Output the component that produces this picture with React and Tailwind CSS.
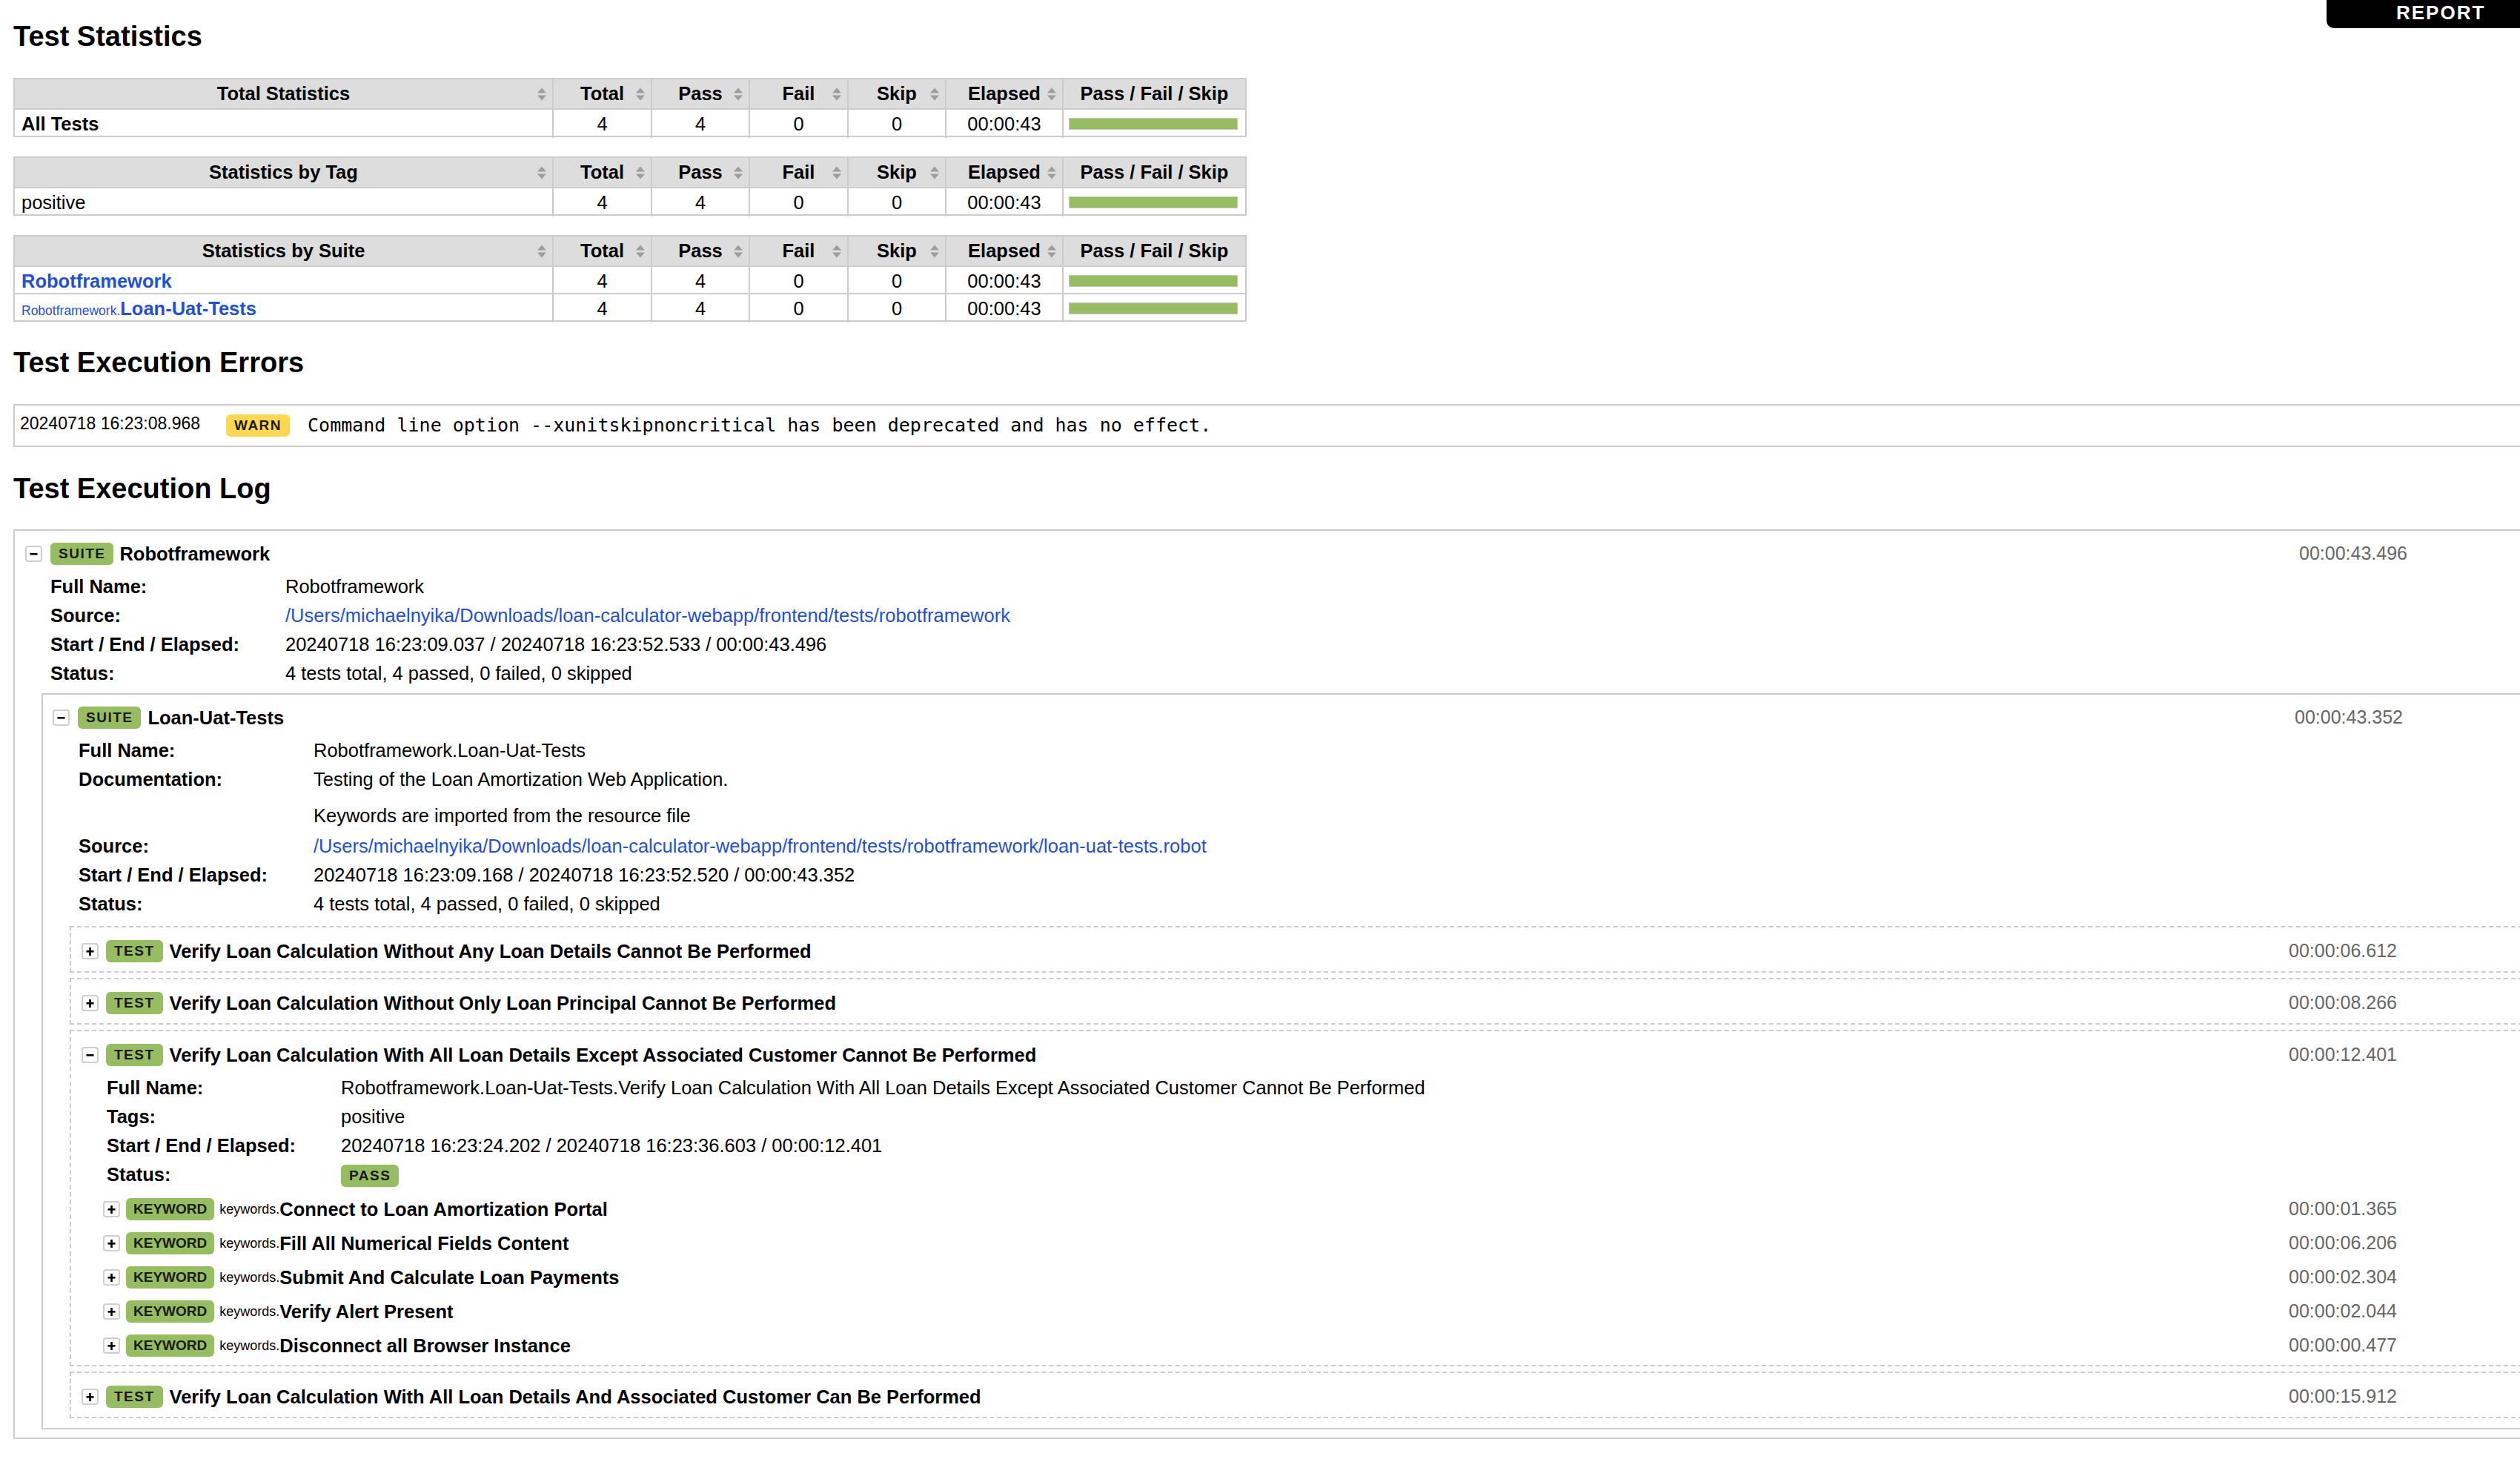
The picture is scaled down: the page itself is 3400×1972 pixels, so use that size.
const cols = 'grid grid-cols-[725px_133px_132px_133px_132px_158px_247px]'

function SortIcon() {
  return (
    <svg className="absolute right-[7px] top-1/2 -translate-y-1/2" width="14" height="19" viewBox="0 0 14 19">
      <path d="M7 1L13 8H1Z M1 11H13L7 18Z" fill="#9d9d9d" />
    </svg>
  )
}

function Toggle({ open }) {
  return (
    <span className="flex h-[22px] w-[23px] shrink-0 items-center justify-center rounded-[4px] border-2 border-[#cfcfcf] bg-white">
      <svg width="11" height="11" viewBox="0 0 11 11">
        <rect x="0.5" y="4" width="10" height="2.6" fill="#000" />
        {!open && <rect x="4.2" y="0" width="2.6" height="11" fill="#000" />}
      </svg>
    </span>
  )
}

function Label({ children, className = '', track = 'tracking-[1.5px] px-[11px]' }) {
  return (
    <span className={`flex h-[30px] shrink-0 items-center rounded-[6px] bg-[#97bd61] text-[19px] font-bold text-[#1a1a1a] ${track} ${className}`}>
      {children}
    </span>
  )
}

function Elapsed({ children }) {
  return <span className="ml-auto text-[25px] text-[#666]">{children}</span>
}

function Meta({ label, children, w = 'grid-cols-[317px_1fr]' }) {
  return (
    <div className={`grid ${w} leading-[39px]`}>
      <span className="font-bold">{label}</span>
      <div>{children}</div>
    </div>
  )
}

function StatTable({ title, rows }) {
  const heads = ['Total', 'Pass', 'Fail', 'Skip', 'Elapsed']
  return (
    <div className="w-[1664px] border-2 border-[#ccc]">
      <div className={`${cols} h-[39px] bg-[#ddd] font-bold`}>
        <div className="relative flex items-center justify-center">
          {title}
          <SortIcon />
        </div>
        {heads.map((h) => (
          <div key={h} className="relative flex items-center justify-center border-l-2 border-[#ccc]">
            {h}
            <SortIcon />
          </div>
        ))}
        <div className="flex items-center justify-center border-l-2 border-[#ccc]">Pass / Fail / Skip</div>
      </div>
      {rows.map((r, i) => (
        <div key={i} className={`${cols} h-[37px] border-t-2 border-[#ccc]`}>
          <div className="flex items-center pl-[9px]">{r.name}</div>
          <div className="flex items-center justify-center border-l-2 border-[#ccc]">4</div>
          <div className="flex items-center justify-center border-l-2 border-[#ccc]">4</div>
          <div className="flex items-center justify-center border-l-2 border-[#ccc]">0</div>
          <div className="flex items-center justify-center border-l-2 border-[#ccc]">0</div>
          <div className="flex items-center justify-center border-l-2 border-[#ccc]">00:00:43</div>
          <div className="flex items-center border-l-2 border-[#ccc] pl-[7px] pr-[10px]">
            <div className="h-[16px] flex-1 border border-[#c4c4c4] bg-[#97bd61]" />
          </div>
        </div>
      ))}
    </div>
  )
}

function TestBox({ name, elapsed, children, open }) {
  return (
    <div className="mr-[6px] border-2 border-dashed border-[#ccc]">
      <div className={`flex h-[30px] items-center pl-[14px] pr-[188px] ${open ? 'mt-[17px] mb-[10px]' : 'mt-[17px] mb-[12px]'}`}>
        <Toggle open={open} />
        <Label className="ml-[10px]">TEST</Label>
        <span className="ml-[9px] font-bold">{name}</span>
        <Elapsed>{elapsed}</Elapsed>
      </div>
      {children}
    </div>
  )
}

function Keyword({ name, elapsed }) {
  return (
    <div className="flex h-[46px] items-center pl-[43px] pr-[188px]">
      <Toggle />
      <Label className="ml-[8px]" track="tracking-[0px] px-[10px]">KEYWORD</Label>
      <span className="ml-[7px] text-[18px]">keywords.</span>
      <span className="font-bold">{name}</span>
      <Elapsed>{elapsed}</Elapsed>
    </div>
  )
}

const link = 'text-[#1f50d6]'

export default function App() {
  return (
    <div className="relative min-h-[1972px] w-[3400px] overflow-hidden bg-white font-['Liberation_Sans',Arial,sans-serif] text-[25.5px] text-black">
      {/* report tab */}
      <a className="absolute right-0 top-0 h-[38px] w-[261px] rounded-bl-[10px] bg-black pl-[94px] pt-[4px] text-[26px] font-bold leading-[26px] tracking-[2px] text-white">
        REPORT
      </a>

      <div className="w-[3440px] pl-[18px] pt-[27px]">
        <h2 className="text-[38px] font-bold leading-[44px]">Test Statistics</h2>

        <div className="mt-[34px] flex flex-col gap-[26px]">
          <StatTable title="Total Statistics" rows={[{ name: <span className="font-bold">All Tests</span> }]} />
          <StatTable title="Statistics by Tag" rows={[{ name: 'positive' }]} />
          <StatTable
            title="Statistics by Suite"
            rows={[
              { name: <span className={`font-bold ${link}`}>Robotframework</span> },
              {
                name: (
                  <span className={link}>
                    <span className="text-[17.5px]">Robotframework.</span>
                    <span className="font-bold">Loan-Uat-Tests</span>
                  </span>
                ),
              },
            ]}
          />
        </div>

        <h2 className="mt-[33px] text-[38px] font-bold leading-[44px]">Test Execution Errors</h2>
        <div className="mt-[34px] flex h-[58px] w-[3422px] items-center border-2 border-[#ccc]">
          <span className="mb-[6px] w-[285px] shrink-0 pl-[7px] text-[23px]">20240718 16:23:08.968</span>
          <span className="flex h-[30px] items-center rounded-[6px] bg-[#fed84f] px-[11px] text-[19px] font-bold tracking-[1.5px] text-[#1a1a1a]">
            WARN
          </span>
          <span className="ml-[24px] font-['DejaVu_Sans_Mono',monospace] text-[25px]">
            Command line option --xunitskipnoncritical has been deprecated and has no effect.
          </span>
        </div>

        <h2 className="mt-[34px] text-[38px] font-bold leading-[44px]">Test Execution Log</h2>

        {/* top suite */}
        <div className="mt-[33px] w-[3422px] border-2 border-[#ccc] pb-[11px]">
          <div className="mb-[10px] mt-[16px] flex h-[30px] items-center pl-[14px] pr-[190px]">
            <Toggle open />
            <Label className="ml-[11px]">SUITE</Label>
            <span className="ml-[8px] font-bold">Robotframework</span>
            <Elapsed>00:00:43.496</Elapsed>
          </div>
          <div className="pl-[48px]">
            <Meta label="Full Name:">Robotframework</Meta>
            <Meta label="Source:">
              <span className={link}>/Users/michaelnyika/Downloads/loan-calculator-webapp/frontend/tests/robotframework</span>
            </Meta>
            <Meta label="Start / End / Elapsed:">20240718 16:23:09.037 / 20240718 16:23:52.533 / 00:00:43.496</Meta>
            <Meta label="Status:">4 tests total, 4 passed, 0 failed, 0 skipped</Meta>
          </div>

          {/* child suite */}
          <div className="ml-[36px] mr-[6px] mt-[7px] border-2 border-[#ccc] pb-[13px]">
            <div className="mb-[10px] mt-[16px] flex h-[30px] items-center pl-[13px] pr-[188px]">
              <Toggle open />
              <Label className="ml-[11px]">SUITE</Label>
              <span className="ml-[9px] font-bold">Loan-Uat-Tests</span>
              <Elapsed>00:00:43.352</Elapsed>
            </div>
            <div className="pl-[48px]">
              <Meta label="Full Name:">Robotframework.Loan-Uat-Tests</Meta>
              <Meta label="Documentation:">
                <p>Testing of the Loan Amortization Web Application.</p>
                <p className="mb-[2px] mt-[10px]">Keywords are imported from the resource file</p>
              </Meta>
              <Meta label="Source:">
                <span className={link}>
                  /Users/michaelnyika/Downloads/loan-calculator-webapp/frontend/tests/robotframework/loan-uat-tests.robot
                </span>
              </Meta>
              <Meta label="Start / End / Elapsed:">20240718 16:23:09.168 / 20240718 16:23:52.520 / 00:00:43.352</Meta>
              <Meta label="Status:">4 tests total, 4 passed, 0 failed, 0 skipped</Meta>
            </div>

            <div className="ml-[36px] mt-[10px] flex flex-col gap-[7px]">
              <TestBox name="Verify Loan Calculation Without Any Loan Details Cannot Be Performed" elapsed="00:00:06.612" />
              <TestBox name="Verify Loan Calculation Without Only Loan Principal Cannot Be Performed" elapsed="00:00:08.266" />
              <TestBox
                open
                name="Verify Loan Calculation With All Loan Details Except Associated Customer Cannot Be Performed"
                elapsed="00:00:12.401"
              >
                <div className="pl-[48px]">
                  <Meta label="Full Name:" w="grid-cols-[316px_1fr]">
                    Robotframework.Loan-Uat-Tests.Verify Loan Calculation With All Loan Details Except Associated Customer Cannot Be Performed
                  </Meta>
                  <Meta label="Tags:" w="grid-cols-[316px_1fr]">positive</Meta>
                  <Meta label="Start / End / Elapsed:" w="grid-cols-[316px_1fr]">
                    20240718 16:23:24.202 / 20240718 16:23:36.603 / 00:00:12.401
                  </Meta>
                  <Meta label="Status:" w="grid-cols-[316px_1fr]">
                    <div className="flex h-[39px] items-center pt-[2px]">
                      <Label>PASS</Label>
                    </div>
                  </Meta>
                </div>
                <div className="mb-[3px] mt-[4px]">
                  <Keyword name="Connect to Loan Amortization Portal" elapsed="00:00:01.365" />
                  <Keyword name="Fill All Numerical Fields Content" elapsed="00:00:06.206" />
                  <Keyword name="Submit And Calculate Loan Payments" elapsed="00:00:02.304" />
                  <Keyword name="Verify Alert Present" elapsed="00:00:02.044" />
                  <Keyword name="Disconnect all Browser Instance" elapsed="00:00:00.477" />
                </div>
              </TestBox>
              <TestBox name="Verify Loan Calculation With All Loan Details And Associated Customer Can Be Performed" elapsed="00:00:15.912" />
            </div>
          </div>
        </div>
      </div>
    </div>
  )
}
